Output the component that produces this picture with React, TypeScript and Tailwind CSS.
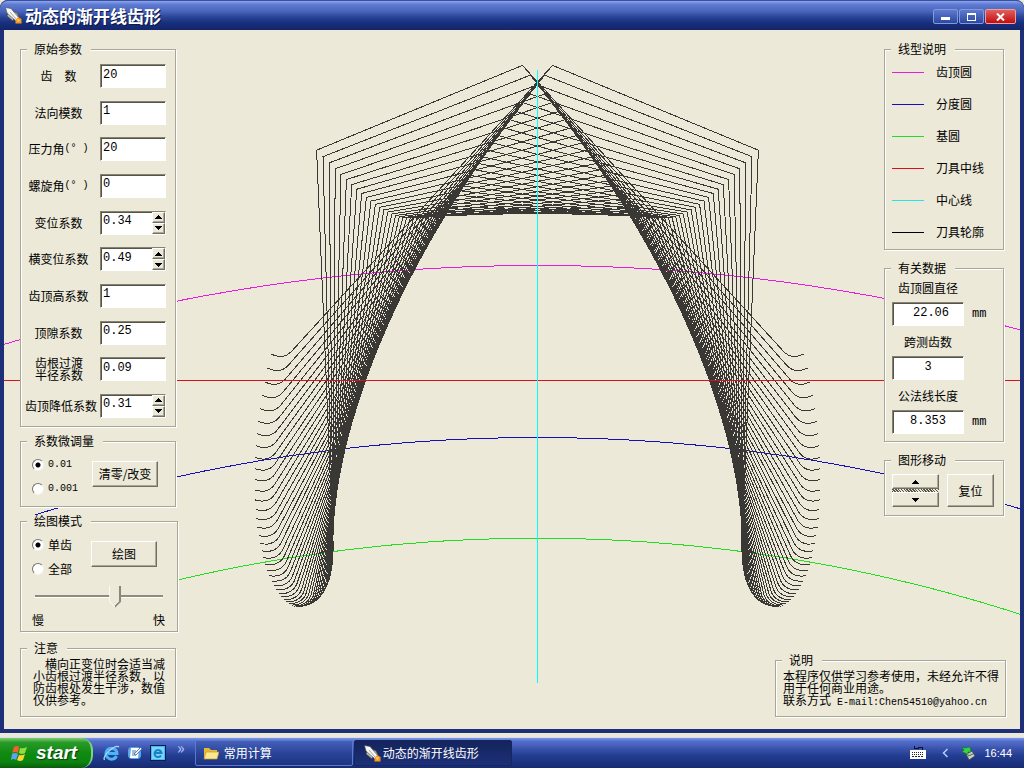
import React, { useState } from 'react';

const TEETH = 20;
const SCALE = 167;
const CENTER_X = 537.5;
const CENTER_Y = 2107.5;
const PRESSURE = (20 * Math.PI) / 180;

const RAISED =
  'bg-[#ece9d8] border border-t-white border-l-white border-r-[#716f64] border-b-[#716f64] shadow-[inset_-1px_-1px_0_#aca899]';
const SUNKEN =
  'bg-white text-black border border-t-[#85826f] border-l-[#85826f] border-r-white border-b-white shadow-[inset_1px_1px_0_#55534a] rounded-none outline-none';

const params = [
  { id: 'z', label: '齿　数', value: '20' },
  { id: 'm', label: '法向模数', value: '1' },
  { id: 'alpha', label: '压力角', unit: '(° )', value: '20' },
  { id: 'beta', label: '螺旋角', unit: '(° )', value: '0' },
  { id: 'x', label: '变位系数', value: '0.34', spin: true },
  { id: 'xt', label: '横变位系数', value: '0.49', spin: true },
  { id: 'ha', label: '齿顶高系数', value: '1' },
  { id: 'c', label: '顶隙系数', value: '0.25' },
  { id: 'rho', label: '齿根过渡半径系数', value: '0.09', wrap: true },
  { id: 'dy', label: '齿顶降低系数', value: '0.31', spin: true },
];

const lineTypes = [
  { label: '齿顶圆', color: 'bg-[#e81be0]' },
  { label: '分度圆', color: 'bg-[#1410b8]' },
  { label: '基圆', color: 'bg-[#22dd22]' },
  { label: '刀具中线', color: 'bg-[#d8101c]' },
  { label: '中心线', color: 'bg-[#22e6e6]' },
  { label: '刀具轮廓', color: 'bg-black' },
];

const results = [
  { id: 'da', label: '齿顶圆直径', value: '22.06', unit: 'mm', pad: 'pl-[6px]' },
  { id: 'k', label: '跨测齿数', value: '3', unit: '', pad: 'pl-0' },
  { id: 'wk', label: '公法线长度', value: '8.353', unit: 'mm', pad: 'pl-0' },
];

// Rack space outline: (u along the rack, h above the pitch line), in modules
const rackProfile = () => {
  const shift = 0.34;
  const half = (Math.PI / 2 + 0.49) / 2;
  const rho = 0.09;
  const top = shift + 1;
  const tip = shift - 1.24;
  const flank = (h: number) => half + (shift - h) * Math.tan(PRESSURE);
  const ch = tip + rho;
  const cu = flank(ch) + rho / Math.cos(PRESSURE);
  const right: [number, number][] = [[flank(top), top]];
  for (let i = 0; i <= 6; i++) {
    const a = Math.PI + PRESSURE + (i / 6) * (Math.PI / 2 - PRESSURE);
    right.push([cu + rho * Math.cos(a), ch + rho * Math.sin(a)]);
  }
  right.push([Math.PI / 2, tip]);
  const left = right.map(([u, h]) => [-u, h] as [number, number]).reverse();
  return [...left, ...right];
};

const cutterPaths = () => {
  const r = TEETH / 2;
  const profile = rackProfile();
  const steps = 49;
  const max = (22.4 * Math.PI) / 180;
  return Array.from({ length: steps + 1 }, (_, i) => {
    const phi = max - (2 * max * i) / steps;
    const sin = Math.sin(phi);
    const cos = Math.cos(phi);
    return profile
      .map(([u, h]) => {
        const n = (r + h) * SCALE;
        const t = (r * phi + u) * SCALE;
        const x = CENTER_X - n * sin + t * cos;
        const y = CENTER_Y - n * cos - t * sin;
        return `${x.toFixed(1)},${y.toFixed(1)}`;
      })
      .join(' ');
  });
};

const arc = (radius: number) => {
  const pts: string[] = [];
  for (let a = -17.5; a <= 20; a += 0.5) {
    const rad = (a * Math.PI) / 180;
    const x = CENTER_X + radius * SCALE * Math.sin(rad);
    const y = CENTER_Y - radius * SCALE * Math.cos(rad);
    pts.push(`${x.toFixed(1)},${y.toFixed(1)}`);
  }
  return pts.join(' ');
};

const GearDrawing = () => (
  <svg
    className="[grid-area:1/1] w-full h-full"
    viewBox="4 30 1016 699"
    preserveAspectRatio="xMidYMid meet"
    fill="none"
    shapeRendering="crispEdges"
  >
    <polyline points={arc(11.03)} stroke="#e81be0" />
    <polyline points={arc(10)} stroke="#1410b8" />
    <polyline points={arc(10 * Math.cos(PRESSURE))} stroke="#22dd22" />
    {cutterPaths().map((points, i) => (
      <polyline key={i} points={points} stroke="#3a3834" />
    ))}
    <rect x="4" y="380" width="1016" height="1" fill="#d8101c" />
    <rect x="537" y="70" width="1" height="613" fill="#00ffff" />
  </svg>
);

const Group = ({ title, className, children }: { title: string; className: string; children: React.ReactNode }) => (
  <fieldset className="min-w-0 bg-[#ece9d8] border border-[#a9a697] shadow-[1px_1px_0_#fff,inset_1px_1px_0_#fff]">
    <legend className="ml-[6px] pl-[7px] pr-[9px] bg-[#ece9d8] leading-3">{title}</legend>
    <div className={className}>{children}</div>
  </fieldset>
);

const Triangle = ({ down }: { down?: boolean }) => (
  <svg width="7" height="4" viewBox="0 0 7 4" shapeRendering="crispEdges">
    <path d={down ? 'M0 0H7V1H6V2H5V3H4V4H3V3H2V2H1V1H0Z' : 'M3 0H4V1H5V2H6V3H7V4H0V3H1V2H2V1H3Z'} />
  </svg>
);

const Rocket = () => (
  <svg width="17" height="17" viewBox="0 0 17 17" className="shrink-0">
    <path d="M3 6L2 9L8 14L9 11Z" fill="#b9b8b2" stroke="#3c3b38" strokeWidth="0.6" />
    <path d="M8 4L12 6L14 10L12 11Z" fill="#b9b8b2" stroke="#3c3b38" strokeWidth="0.6" />
    <path d="M0.5 0.5L6 1.5L14 11L11 14L2 6Z" fill="#f8f8f4" stroke="#4a4946" strokeWidth="0.6" />
    <path d="M5 5L11 12" stroke="#a8a7a2" />
    <path d="M13 10L16.5 12V16.5H10.5L10.5 13Z" fill="#f79a1c" />
    <path d="M12 12L15 13L13 15Z" fill="#ffd768" />
  </svg>
);

const IeIcon = () => (
  <svg width="17" height="17" viewBox="0 0 17 17">
    <path d="M13.5 11A5.5 5.5 0 1 1 14 8.5H5" fill="none" stroke="#4db4f5" strokeWidth="3" />
    <path d="M1.5 15C-1 11 12-1 16 2" fill="none" stroke="#a9dcff" strokeWidth="1.3" />
  </svg>
);

const TitleBar = () => (
  <header className="h-[30px] shrink-0 flex items-center pl-[5px] pr-2 rounded-t-lg border-t border-[#3c50a0] bg-[linear-gradient(#8ba4ee,#5f7cd2_12%,#4a66bc_35%,#2a4598_55%,#182f7c_75%,#14256a)]">
    <Rocket />
    <h1 className="ml-[3px] text-[17px] leading-5 font-bold text-white [text-shadow:1px_1px_0_#0c1848]">动态的渐开线齿形</h1>
    <div className="ml-auto mt-0.5 flex gap-px">
      <button aria-label="最小化" className="w-[25px] h-[15px] flex items-end justify-center pb-[3px] rounded-xs border border-[#8398dd] bg-[linear-gradient(#5e7bd0,#2c479f)]">
        <span className="w-[9px] h-[3px] bg-white"></span>
      </button>
      <button aria-label="最大化" className="w-[25px] h-[15px] flex items-center justify-center rounded-xs border border-[#8398dd] bg-[linear-gradient(#5e7bd0,#2c479f)]">
        <span className="w-[9px] h-[8px] border border-t-2 border-white"></span>
      </button>
      <button aria-label="关闭" className="w-[31px] h-[15px] flex items-center justify-center rounded-xs border border-[#e8a0a0] bg-[linear-gradient(#e0605c,#c40c10)]">
        <svg width="9" height="8" viewBox="0 0 9 8">
          <path d="M1 0.5L8 7.5M8 0.5L1 7.5" stroke="#fff" strokeWidth="2" />
        </svg>
      </button>
    </div>
  </header>
);

const Radio = ({ name, label, mono, defaultChecked }: { name: string; label: string; mono?: boolean; defaultChecked?: boolean }) => (
  <label className="flex items-center gap-1 h-3">
    <input
      type="radio"
      name={name}
      defaultChecked={defaultChecked}
      className="appearance-none w-3 h-3 rounded-full bg-white border border-t-[#77756a] border-l-[#77756a] border-r-[#f4f2e8] border-b-[#f4f2e8] checked:bg-[radial-gradient(circle,#000_2px,#fff_3px)]"
    />
    <span className={mono ? "text-[10px] font-['Liberation_Mono',monospace]" : ''}>{label}</span>
  </label>
);

const ParamPanel = () => (
  <Group title="原始参数" className="pt-[9px] pb-2 pl-1 pr-[9px]">
    <div className="h-[354px] flex flex-col justify-between">
      {params.map(p => (
        <div key={p.id} className="flex items-center justify-between">
          <label
            htmlFor={p.id}
            className={p.wrap ? 'w-12 ml-[10px] leading-3' : 'min-w-[67px] flex justify-center items-center whitespace-nowrap leading-3'}
          >
            {p.label}
            {p.unit && <span className="text-[10px] whitespace-pre font-['Liberation_Mono',monospace]">{p.unit}</span>}
          </label>
          <div className={`w-[66px] h-6 flex ${SUNKEN}`}>
            <input
              id={p.id}
              defaultValue={p.value}
              className="flex-1 min-w-0 pl-[2px] pb-[3px] bg-transparent outline-none text-xs font-['Liberation_Mono',monospace]"
            />
            {p.spin && (
              <div className="w-[13px] flex flex-col">
                <button aria-label={`${p.label} 增加`} className={`flex-1 flex items-center justify-center ${RAISED}`}>
                  <Triangle />
                </button>
                <button aria-label={`${p.label} 减少`} className={`flex-1 flex items-center justify-center ${RAISED}`}>
                  <Triangle down />
                </button>
              </div>
            )}
          </div>
        </div>
      ))}
    </div>
  </Group>
);

const StepPanel = () => (
  <Group title="系数微调量" className="pt-3 pb-[11px] pl-[11px] pr-[17px]">
    <div className="flex justify-between items-start">
      <div className="flex flex-col gap-3">
        <Radio name="step" label="0.01" mono defaultChecked />
        <Radio name="step" label="0.001" mono />
      </div>
      <button className={`w-[66px] h-[26px] mt-0.5 whitespace-nowrap ${RAISED}`}>清零/改变</button>
    </div>
  </Group>
);

const DrawPanel = () => {
  const [speed, setSpeed] = useState(64);

  return (
    <Group title="绘图模式" className="w-[156px] pt-3 pb-[5px] pl-[11px]">
      <div className="flex justify-between items-start pr-5">
        <div className="flex flex-col gap-3">
          <Radio name="mode" label="单齿" defaultChecked />
          <Radio name="mode" label="全部" />
        </div>
        <button className={`w-[66px] h-[26px] mt-0.5 ${RAISED}`}>绘图</button>
      </div>
      <input
        type="range"
        aria-label="速度"
        value={speed}
        onChange={e => setSpeed(Number(e.target.value))}
        className="block appearance-none bg-transparent w-32 h-[22px] mt-[10px] ml-[3px] [&::-webkit-slider-runnable-track]:h-[3px] [&::-webkit-slider-runnable-track]:bg-[linear-gradient(#8f8c7e_2px,#fff_2px)] [&::-webkit-slider-thumb]:appearance-none [&::-webkit-slider-thumb]:w-[12px] [&::-webkit-slider-thumb]:h-[22px] [&::-webkit-slider-thumb]:-mt-[9px] [&::-webkit-slider-thumb]:bg-[linear-gradient(45deg,#fff_62%,#ece9d8_62%),linear-gradient(315deg,#8a8778_68%,#ece9d8_68%),linear-gradient(90deg,#fff_1px,#ece9d8_1px,#ece9d8_10px,#8a8778_10px)] [&::-webkit-slider-thumb]:bg-[size:6px_6px,6px_6px,12px_16px] [&::-webkit-slider-thumb]:bg-[position:0_16px,6px_16px,0_0] [&::-webkit-slider-thumb]:bg-no-repeat [&::-webkit-slider-thumb]:[clip-path:polygon(0_0,100%_0,100%_16px,50%_100%,0_16px)]"
      />
      <div className="flex justify-between mt-[7px] mr-3 leading-3">
        <span>慢</span>
        <span>快</span>
      </div>
    </Group>
  );
};

const LineTypePanel = () => (
  <Group title="线型说明" className="py-px pl-[7px]">
    <ul>
      {lineTypes.map(l => (
        <li key={l.label} className="h-8 flex items-center gap-3">
          <span className={`w-8 h-px ${l.color}`}></span>
          {l.label}
        </li>
      ))}
    </ul>
  </Group>
);

const ResultPanel = () => (
  <Group title="有关数据" className="pt-2 pb-[7px] pl-[7px]">
    <div className="flex flex-col gap-[10px]">
      {results.map(r => (
        <div key={r.id} className="flex flex-col gap-2">
          <label htmlFor={r.id} className="w-[72px] text-center leading-3">{r.label}</label>
          <div className="flex items-center gap-2">
            <input
              id={r.id}
              readOnly
              value={r.value}
              className={`w-[72px] h-6 pb-[2px] text-center text-xs font-['Liberation_Mono',monospace] ${r.pad} ${SUNKEN}`}
            />
            <span className="text-xs font-['Liberation_Mono',monospace]">{r.unit}</span>
          </div>
        </div>
      ))}
    </div>
  </Group>
);

const MovePanel = () => (
  <Group title="图形移动" className="py-2 px-[7px]">
    <div className="flex gap-2">
      <div className="w-[47px] h-[33px] flex flex-col">
        <button aria-label="上移" className={`flex-1 flex items-center justify-center ${RAISED}`}>
          <Triangle />
        </button>
        <span className="h-[3px] bg-[repeating-linear-gradient(45deg,#55534a_0_1px,#ece9d8_1px_2px)]"></span>
        <button aria-label="下移" className={`flex-1 flex items-center justify-center ${RAISED}`}>
          <Triangle down />
        </button>
      </div>
      <button className={`w-[47px] h-[33px] ${RAISED}`}>复位</button>
    </div>
  </Group>
);

const Taskbar = () => (
  <footer className="h-[30px] shrink-0 flex items-center text-white bg-[linear-gradient(#7c98ea,#5570cc_10%,#3a54ae_35%,#223c90_60%,#162a72)]">
    <button className="w-[93px] h-full flex items-center pl-[11px] gap-2 rounded-r-xl border-r-2 border-[#7ad47a] bg-[linear-gradient(#7cd070,#2a9a2a_15%,#108a12_50%,#0c8410_80%,#0a5c0c)]">
      <svg width="17" height="17" viewBox="0 0 17 17">
        <path d="M3 2Q6 0 8 2L7 8Q4 6 1 8Z" fill="#f2602c" />
        <path d="M9 3Q12 4 16 2L14 8Q11 10 8 8Z" fill="#8ede3c" />
        <path d="M1 9Q4 7 7 9L5 15Q3 13 0 15Z" fill="#5aa4f4" />
        <path d="M8 10Q11 11 14 9L12 15Q9 17 6 15Z" fill="#fcd436" />
      </svg>
      <span className="text-[19px] leading-5 font-bold italic font-['Liberation_Sans',sans-serif] [text-shadow:1px_1px_1px_#0a3c0a]">start</span>
    </button>
    <div className="flex items-center gap-[7px] ml-[10px]">
      <IeIcon />
      <svg width="16" height="16" viewBox="0 0 16 16">
        <rect x="1" y="2" width="13" height="12" rx="4" fill="#58a8e8" />
        <path d="M4 3H12L11 13H3Z" fill="#fff" />
        <path d="M5 6H9M5 8H8M5 10H9" stroke="#4872b8" />
        <path d="M7 9L14 2L15 4L9 10Z" fill="#e8f4ff" stroke="#2c5088" strokeWidth="0.7" />
      </svg>
      <svg width="16" height="16" viewBox="0 0 16 16">
        <rect x="0.5" y="0.5" width="15" height="15" fill="#48b8ec" stroke="#0a1c50" />
        <rect x="2" y="2" width="12" height="12" fill="#7cd4f6" />
        <path d="M11 10.5A3.5 3.5 0 1 1 11.5 8H5" fill="none" stroke="#1680c8" strokeWidth="2" />
      </svg>
    </div>
    <span className="ml-[11px] mb-3 text-base leading-4 text-[#b4c8fc]">»</span>
    <button className="w-[158px] h-[26px] ml-[10px] pl-[7px] flex items-center gap-[5px] rounded-xs border border-[#5a78d0] bg-[linear-gradient(#4460b8,#2a4498_50%,#1c347f)]">
      <svg width="16" height="14" viewBox="0 0 16 14">
        <path d="M1 2H6L8 4H14V12H1Z" fill="#e8b83c" />
        <path d="M3 6H16L14 13H1Z" fill="#fce88c" stroke="#c8942c" strokeWidth="0.7" />
      </svg>
      常用计算
    </button>
    <button className="w-[158px] h-[26px] ml-px pl-[9px] flex items-center gap-[2px] rounded-xs border border-[#16265e] bg-[linear-gradient(#14245c,#1c3078)]">
      <Rocket />
      动态的渐开线齿形
    </button>
    <div className="ml-auto pr-3 flex items-center">
      <svg width="16" height="14" viewBox="0 0 16 14" shapeRendering="crispEdges">
        <path d="M4 0V2H8V1H12V4" fill="none" stroke="#0a1030" />
        <rect x="0" y="4" width="16" height="9" fill="#fff" />
        <path d="M2 6.5H14M2 8.5H14" stroke="#222" strokeDasharray="1 1" />
        <path d="M2 10.5H14" stroke="#222" strokeDasharray="2 1" />
      </svg>
      <svg width="7" height="10" viewBox="0 0 7 10" className="ml-4">
        <path d="M5.5 1L1.5 5L5.5 9" fill="none" stroke="#b4ccff" strokeWidth="1.5" />
      </svg>
      <svg width="15" height="15" viewBox="0 0 15 15" className="ml-3">
        <path d="M5 8L11 5L14 10L8 14Z" fill="#c8cec8" stroke="#38443a" strokeWidth="0.8" />
        <path d="M7 10L12 8" stroke="#58645a" />
        <path d="M1 1L4 2L9 1L10 6L7 6L7 9L4 7L1 6L3 4Z" fill="#38d044" stroke="#0c6c1c" strokeWidth="0.5" />
      </svg>
      <span className="ml-2 text-[11px] font-['Liberation_Sans',sans-serif]">16:44</span>
    </div>
  </footer>
);

const App: React.FC = () => {
  return (
    <div className="min-h-screen flex flex-col bg-[#ece9d8] text-xs text-black font-['Noto_Sans_CJK_SC',sans-serif]">
      <div className="flex-1 flex flex-col bg-[#1c2f78] rounded-t-lg">
        <TitleBar />
        <main className="flex-1 grid mx-1 mb-1 bg-[#ece9d8]">
          <GearDrawing />
          <div className="[grid-area:1/1] flex justify-between pt-[13px] pb-3 pl-4 pr-[14px]">
            {/* Left column: inputs */}
            <div className="w-[156px] flex flex-col gap-2">
              <ParamPanel />
              <StepPanel />
              <div className="w-[158px]">
                <DrawPanel />
              </div>
              <div className="mt-0.5">
                <Group title="注意" className="pt-1 pb-[10px] pl-3 pr-[10px]">
                  <p className="leading-3 indent-3">横向正变位时会适当减小齿根过渡半径系数，以防齿根处发生干涉，数值仅供参考。</p>
                </Group>
              </div>
            </div>

            {/* Right column: legend and results */}
            <div className="flex flex-col items-end justify-between">
              <div className="w-[120px] mr-0.5 flex flex-col gap-3">
                <LineTypePanel />
                <ResultPanel />
                <MovePanel />
              </div>
              <Group title="说明" className="pt-1 pb-[10px] pl-[7px] pr-[6px]">
                <p className="w-54 leading-3">本程序仅供学习参考使用，未经允许不得用于任何商业用途。</p>
                <p className="h-3 leading-3 flex items-baseline gap-[6px]">
                  <span>联系方式</span>
                  <span className="text-[10px] font-['Liberation_Mono',monospace]">E-mail:Chen54510@yahoo.cn</span>
                </p>
              </Group>
            </div>
          </div>
        </main>
      </div>
      <div className="h-[5px] shrink-0 border-b border-[#d8dcec]"></div>
      <Taskbar />
    </div>
  );
};

export default App;
